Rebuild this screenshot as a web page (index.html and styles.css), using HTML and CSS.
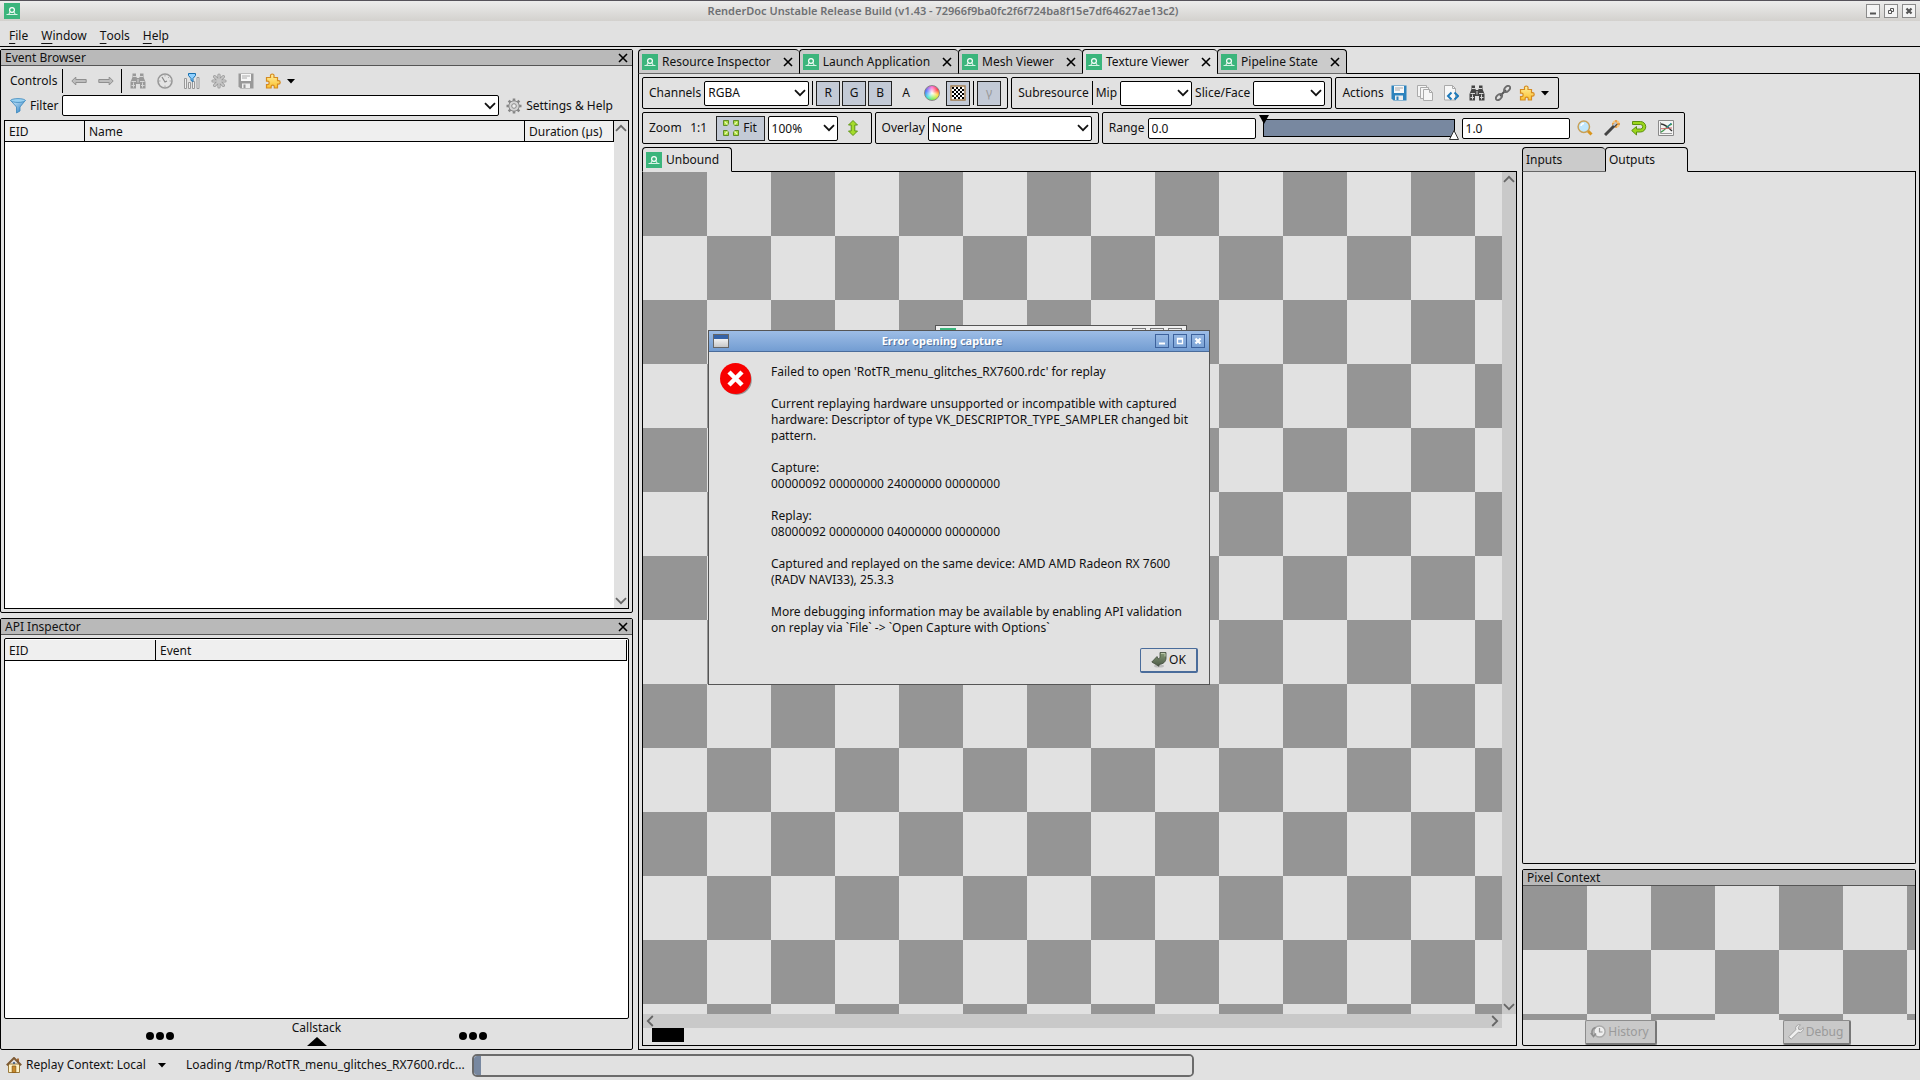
FILE: index.html
```html
<!DOCTYPE html>
<html lang="en">
<head>
    <meta charset="UTF-8">
    <meta name="viewport" content="width=device-width, initial-scale=1.0">
    <title>RenderDoc Unstable Release Build</title>
    <link rel="stylesheet" href="styles.css">
</head>
<body>
    <!-- Icon sprites -->
    <svg class="sprites" aria-hidden="true">
        <defs>
            <linearGradient id="blue" x1="0" y1="0" x2="1" y2="1"><stop offset="0" stop-color="#d9f0fd"/><stop offset="1" stop-color="#1b78c2"/></linearGradient>
            <linearGradient id="gold" x1="0" y1="0" x2="0" y2="1"><stop offset="0" stop-color="#fff0a0"/><stop offset="1" stop-color="#fbc02d"/></linearGradient>
            <linearGradient id="ok" x1="0" y1="0" x2="0" y2="1"><stop offset="0" stop-color="#869a76"/><stop offset="1" stop-color="#4c5a48"/></linearGradient>
        </defs>
        <symbol id="i-logo" viewBox="0 0 16 16"><rect width="16" height="16" fill="#3bb57c"/><circle cx="8" cy="7" r="2.4" fill="none" stroke="#fff" stroke-width="1.2"/><path d="M2.5 11.5h2.2l1.3-2.4M13.5 11.5h-2.2L10 9.1M4.7 11.5h6.6" fill="none" stroke="#d8f3e6" stroke-width="1.1"/></symbol>
        <symbol id="i-close" viewBox="0 0 10 10"><path d="M1 1l8 8M9 1L1 9" stroke="#000" stroke-width="1.6"/></symbol>
        <symbol id="i-chev" viewBox="0 0 12 8"><path d="M1 1.2l5 5 5-5" fill="none" stroke="currentColor" stroke-width="1.8"/></symbol>
        <symbol id="i-caret" viewBox="0 0 8 5"><path d="M0 0h8L4 4.6z"/></symbol>
        <symbol id="i-left" viewBox="0 0 16 16"><path d="M.8 8l4-4v2.5h10.4v3H4.8V12z" fill="#bdbdbd" stroke="#8f8f8f"/></symbol>
        <symbol id="i-right" viewBox="0 0 16 16"><path d="M15.2 8l-4-4v2.5H.8v3h10.4V12z" fill="#bdbdbd" stroke="#8f8f8f"/></symbol>
        <symbol id="i-bino" viewBox="0 0 16 16"><path d="M2.5.5h3.5v3l1 1.5h2l1-1.5v-3h3.5v3.5L15.5 9v6.5H10v-4.5H6v4.5H.5V9l2-5z" fill="currentColor"/><path d="M3 3.5h3M10 3.5h3M1.5 8.5H6M10 8.5h4.5M1.5 12.5H5M11 12.5h3.5M3.5 9.5v5M12.5 9.5v5M8 6v3.5" stroke="#d6d6d6"/></symbol>
        <symbol id="i-clock" viewBox="0 0 16 16"><circle cx="8" cy="8" r="7" fill="#e4e4e4" stroke="#999" stroke-width="1.6"/><path d="M5 4l3 5 2-1" fill="none" stroke="#888" stroke-width="1.2"/><path d="M8 2v1.500M8 12.500V14M2 8h1.500M12.500 8H14M12 4l-1 1" stroke="#aaa"/></symbol>
        <symbol id="i-bars" viewBox="0 0 16 16"><g fill="#eee" stroke="#999"><path d="M.5 5.500h2v10h-2zM4.500 9.500h2v6h-2zM8.500 8.500h2v7h-2zM13 4.500h2v11h-2z"/></g><path d="M4.500.5h7v2L9 5.500v3L7 7.500v-2l-2.500-3z" fill="#8fd0ff" stroke="#176fae"/></symbol>
        <symbol id="i-star" viewBox="0 0 16 16"><path d="M8 2v12M2 8h12M3.600 3.600l8.800 8.800M12.400 3.600l-8.800 8.800" stroke="#9a9a9a" stroke-width="3.200" stroke-linecap="round"/><path d="M8 2v12M2 8h12M3.600 3.600l8.800 8.800M12.400 3.600l-8.800 8.800" stroke="#c6c6c6" stroke-width="1.600" stroke-linecap="round"/></symbol>
        <symbol id="i-save" viewBox="0 0 16 16"><path d="M.5.5h15v15h-13l-2-2z" fill="currentColor"/><path d="M3 1h10v7H3z" fill="#f7f7f7"/><path d="M4 3h8M4 5h5" stroke="#aaa"/><path d="M4 10.500h8V15H4z" fill="#eee"/><path d="M5.500 11.500h2V15h-2z" fill="currentColor"/></symbol>
        <symbol id="i-puzzle" viewBox="0 0 16 16"><path d="M1.500 4.500h4V3.200a1.800 1.800 0 1 1 3.500 0v1.300h3.500v3.200h1a1.700 1.700 0 1 1 0 3.400h-1v3.900H9.300v-1.300a1.600 1.600 0 0 0-3.200 0V15H1.500v-3.400h1a1.700 1.700 0 0 0 0-3.400h-1z" fill="url(#gold)" stroke="#d58b22" stroke-width="1.200"/></symbol>
        <symbol id="i-filter" viewBox="0 0 16 16"><path d="M.7 2.500L6.500 9v6l3.500-2V9l5.300-6.500z" fill="url(#blue)" stroke="#3a86bd" stroke-width=".8"/><ellipse cx="8" cy="2.500" rx="7.300" ry="1.900" fill="#9bd2f2" stroke="#3a86bd" stroke-width=".8"/></symbol>
        <symbol id="i-gear" viewBox="0 0 16 16"><path d="M8 .5v15M.5 8h15M2.700 2.700l10.600 10.600M13.300 2.700L2.700 13.300" stroke="#858585" stroke-width="2.600"/><circle cx="8" cy="8" r="5.200" fill="#d5d5d5" stroke="#8a8a8a"/><circle cx="8" cy="8" r="2.300" fill="#eee" stroke="#8a8a8a"/></symbol>
        <symbol id="i-tiles" viewBox="0 0 16 16"><path d="M1 1h14v14H1z" fill="#fff" stroke="#a07c50" stroke-width="1.400"/><path d="M2 3h12M2 7h12M2 11h12" stroke="#000" stroke-width="2" stroke-dasharray="2 2"/><path d="M4 5h10M4 9h10M4 13h10" stroke="#000" stroke-width="2" stroke-dasharray="2 2"/></symbol>
        <symbol id="i-fit" viewBox="0 0 16 16"><g fill="#a9db3f" stroke="#55851b" stroke-width=".9"><path d="M.5.5h5v3.200L4.200 5.500H.5z"/><path d="M15.500.5h-5v3.200l1.300 1.800h3.700z"/><path d="M.5 15.500h5v-3.200l-1.300-1.800H.5z"/><path d="M15.500 15.500h-5v-3.200l1.300-1.800h3.700z"/></g><path d="M2 2l2.500 2.500M14 2l-2.500 2.500M2 14l2.500-2.500M14 14l-2.500-2.500" stroke="#e9f7b8" stroke-width="1.300"/></symbol>
        <symbol id="i-updown" viewBox="0 0 16 16"><path d="M8 .5l4.500 4.500H9.800v6h2.700L8 15.500 3.500 11h2.700V5H3.500z" fill="#a5dc2b" stroke="#5e9414"/></symbol>
        <symbol id="i-copy" viewBox="0 0 16 16"><g fill="#f6f6f6" stroke="#aaa"><path d="M.5.5h9v11h-9z"/><path d="M3.500 2.500h8v11h-8z"/><path d="M6.500 4.500h6l3 3v8h-9z"/></g><path d="M12.500 4.500v3h3" fill="none" stroke="#aaa"/></symbol>
        <symbol id="i-code" viewBox="0 0 16 16"><path d="M1.500.5h8l3 3V15h-11z" fill="#f8f8f8" stroke="#aaa"/><path d="M9.500.5v3h3" fill="none" stroke="#aaa"/><path d="M8.500 7.500L5 11l3.500 3.500M11.500 7.500L15 11l-3.500 3.500" fill="none" stroke="#1c79ba" stroke-width="2"/></symbol>
        <symbol id="i-link" viewBox="0 0 16 16"><path d="M5 11l6-6" stroke="#555" stroke-width="2"/><ellipse cx="4" cy="12" rx="3.600" ry="2.300" transform="rotate(-45 4 12)" fill="none" stroke="#6b6b6b" stroke-width="1.800"/><ellipse cx="12" cy="4" rx="3.600" ry="2.300" transform="rotate(-45 12 4)" fill="none" stroke="#6b6b6b" stroke-width="1.800"/></symbol>
        <symbol id="i-zoom" viewBox="0 0 16 16"><path d="M10.500 10.500l4 4" stroke="#d9951c" stroke-width="3"/><circle cx="6.800" cy="6.800" r="5.700" fill="#bfe6fb" stroke="#c9a158" stroke-width="1.500"/><path d="M4 6a3 3 0 0 1 3-2.500" fill="none" stroke="#fff" stroke-width="1.500"/></symbol>
        <symbol id="i-wand" viewBox="0 0 16 16"><circle cx="12" cy="4" r="3.800" fill="#f6c77e"/><path d="M12 0v8M8 4h8" stroke="#e88d2a" stroke-width="1.300"/><path d="M1 15L12.500 3.500" stroke="#444" stroke-width="3"/><path d="M9.500 5.500l3-3" stroke="#c3c8cc" stroke-width="2"/></symbol>
        <symbol id="i-back" viewBox="0 0 16 16"><path d="M1.500 1.500h8a5.200 5.200 0 0 1 0 10.500h-4v3L.7 10.500l4.800-4V9h4a2 2 0 0 0 0-4.500h-8z" fill="#9cd61c" stroke="#5c8f10"/></symbol>
        <symbol id="i-graph" viewBox="0 0 16 16"><path d="M.5.5h15v15H.5z" fill="#f4f4f4" stroke="#8a8a8a"/><path d="M2.500 2v11.500H14" fill="none" stroke="#999"/><path d="M3 4c4 0 7 3 11 7" fill="none" stroke="#333" stroke-width="1.300"/><path d="M3 12c4-1 6-7 11-8" fill="none" stroke="#3c9a4c" stroke-width="1.300"/><path d="M3 8.500c3 1 7-1 11-.5" fill="none" stroke="#c66" stroke-width="1.100"/><path d="M9 8l4-5" stroke="#337ac0"/></symbol>
        <symbol id="i-home" viewBox="0 0 16 16"><path d="M2.500 7h11v8.500h-11z" fill="#fff3c8" stroke="#9b7a3c"/><path d="M11 1.500h2v4h-2z" fill="#a66a34"/><path d="M.8 8.200L8 1l7.200 7.200" fill="none" stroke="#7d5a34" stroke-width="2"/><path d="M6.200 9h3.600v6.500H6.200z" fill="#c98a2c" stroke="#8a5a14" stroke-width=".8"/><circle cx="8" cy="6" r="1.100" fill="#39577d"/></symbol>
        <symbol id="i-history" viewBox="0 0 16 16"><circle cx="9.500" cy="7.500" r="5.600" fill="#eee" stroke="#aaa" stroke-width="1.500"/><path d="M9.500 4v4h3" fill="none" stroke="#999" stroke-width="1.200"/><path d="M5.500 3.500C1 5 1 10 4 12.500M.8 9l2.700 3.500L6 9.500" fill="none" stroke="#8d8d8d" stroke-width="1.600"/></symbol>
        <symbol id="i-wrench" viewBox="0 0 16 16"><path d="M1.800 14.200l-1-1.500 7-7a3.800 3.800 0 0 1 4.700-4.900L10.300 3.200l.4 2.200 2.200.4 2.300-2.200a3.800 3.800 0 0 1-4.900 4.700l-7 6.700z" fill="#efefef" stroke="#a2a2a2"/></symbol>
        <symbol id="i-ok" viewBox="0 0 16 16"><ellipse cx="8" cy="14" rx="5" ry="1.500" fill="#bdbdbd"/><path d="M9 .5h6V6c0 3.500-2.500 6-7 6.500v1.800L.8 10 6 4.500l1 2.300c1.500 0 2-.8 2-2.300z" fill="url(#ok)" stroke="#3f4a3a" stroke-width=".8"/><path d="M10 1.500h4v3" fill="none" stroke="#b7c4a8"/></symbol>
        <symbol id="i-error" viewBox="0 0 32 32"><circle cx="16.800" cy="17" r="15" fill="#777" opacity=".7"/><circle cx="15.500" cy="15.500" r="15.500" fill="#f80000"/><path d="M9 9l13 13M22 9L9 22" stroke="#fff" stroke-width="4.500"/></symbol>
        <symbol id="i-min" viewBox="0 0 12 12"><path d="M3 8.500h6" stroke="currentColor" stroke-width="2"/></symbol>
        <symbol id="i-max" viewBox="0 0 12 12"><path d="M3.500 3.500h5v5h-5zM3 4h6" fill="none" stroke="currentColor" stroke-width="1.300"/></symbol>
        <symbol id="i-restore" viewBox="0 0 12 12"><path d="M5.500 5V3.500h3v3H7M3.500 5.500h3v3h-3z" fill="none" stroke="currentColor"/></symbol>
        <symbol id="i-x" viewBox="0 0 12 12"><path d="M3.500 3.500l5 5M8.500 3.500l-5 5" stroke="currentColor" stroke-width="2.200"/></symbol>
    </svg>

    <header class="titlebar">
        <svg class="icon"><use href="#i-logo"/></svg>
        <h1>RenderDoc Unstable Release Build (v1.43 - 72966f9ba0fc2f6f724ba8f15e7df64627ae13c2)</h1>
        <div class="win-buttons">
            <button aria-label="Minimize"><svg><use href="#i-min"/></svg></button>
            <button aria-label="Restore"><svg><use href="#i-restore"/></svg></button>
            <button aria-label="Close"><svg><use href="#i-x"/></svg></button>
        </div>
    </header>

    <nav class="menubar">
        <button><u>F</u>ile</button>
        <button><u>W</u>indow</button>
        <button><u>T</u>ools</button>
        <button><u>H</u>elp</button>
    </nav>

    <main class="workspace">
        <div class="left">
            <section class="dock dock-events">
                <div class="dock-title"><h2>Event Browser</h2><button aria-label="Close"><svg class="x"><use href="#i-close"/></svg></button></div>
                <div class="controls">
                    <span>Controls</span>
                    <i class="sep"></i>
                    <button aria-label="Previous"><svg class="icon"><use href="#i-left"/></svg></button>
                    <button aria-label="Next"><svg class="icon"><use href="#i-right"/></svg></button>
                    <i class="sep"></i>
                    <button class="dim" aria-label="Find"><svg class="icon"><use href="#i-bino"/></svg></button>
                    <button aria-label="Time durations"><svg class="icon"><use href="#i-clock"/></svg></button>
                    <button aria-label="Columns"><svg class="icon"><use href="#i-bars"/></svg></button>
                    <button aria-label="Bookmark"><svg class="icon"><use href="#i-star"/></svg></button>
                    <button class="dim" aria-label="Export"><svg class="icon"><use href="#i-save"/></svg></button>
                    <button class="drop" aria-label="Extensions"><svg class="icon"><use href="#i-puzzle"/></svg><svg class="caret"><use href="#i-caret"/></svg></button>
                </div>
                <div class="filter">
                    <svg class="icon"><use href="#i-filter"/></svg>
                    <label for="filter">Filter</label>
                    <span class="combo">
                        <input type="text" id="filter">
                        <svg class="chev"><use href="#i-chev"/></svg>
                    </span>
                    <button><svg class="icon"><use href="#i-gear"/></svg>Settings &amp; Help</button>
                </div>
                <div class="list">
                    <div class="list-body">
                        <table>
                            <thead><tr><th class="col-eid">EID</th><th>Name</th><th class="col-duration">Duration (µs)</th></tr></thead>
                        </table>
                    </div>
                    <div class="scroll-v"><svg class="chev up"><use href="#i-chev"/></svg><svg class="chev"><use href="#i-chev"/></svg></div>
                </div>
            </section>

            <section class="dock dock-api">
                <div class="dock-title"><h2>API Inspector</h2><button aria-label="Close"><svg class="x"><use href="#i-close"/></svg></button></div>
                <div class="list inset">
                    <div class="list-body">
                        <table>
                            <thead><tr><th class="col-api">EID</th><th>Event</th></tr></thead>
                        </table>
                    </div>
                </div>
                <button class="callstack">
                    <span class="dots"><i></i><i></i><i></i></span>
                    <span class="callstack-label">Callstack<svg viewBox="0 0 20 9"><path d="M10 0l10 9H0z"/></svg></span>
                    <span class="dots"><i></i><i></i><i></i></span>
                </button>
            </section>
        </div>

        <div class="right">
            <div class="tabs">
                <button class="tab"><svg class="icon"><use href="#i-logo"/></svg>Resource Inspector<svg class="x"><use href="#i-close"/></svg></button>
                <button class="tab"><svg class="icon"><use href="#i-logo"/></svg>Launch Application<svg class="x"><use href="#i-close"/></svg></button>
                <button class="tab"><svg class="icon"><use href="#i-logo"/></svg>Mesh Viewer<svg class="x"><use href="#i-close"/></svg></button>
                <button class="tab active"><svg class="icon"><use href="#i-logo"/></svg>Texture Viewer<svg class="x"><use href="#i-close"/></svg></button>
                <button class="tab"><svg class="icon"><use href="#i-logo"/></svg>Pipeline State<svg class="x"><use href="#i-close"/></svg></button>
                <span class="tab-fill"></span>
            </div>

            <div class="viewer">
                <div class="toolbars">
                    <div class="toolbar">
                        <label for="channels">Channels</label>
                        <span class="combo w-channels"><select id="channels"><option>RGBA</option></select><svg class="chev"><use href="#i-chev"/></svg></span>
                        <i class="sep"></i>
                        <div class="toggles">
                            <button class="tool on">R</button>
                            <button class="tool on">G</button>
                            <button class="tool on">B</button>
                            <button class="tool">A</button>
                            <button class="tool" aria-label="Background colour"><i class="wheel"></i></button>
                            <button class="tool on" aria-label="Checkerboard"><svg class="icon"><use href="#i-tiles"/></svg></button>
                        </div>
                        <i class="sep"></i>
                        <button class="tool on" disabled>γ</button>
                    </div>
                    <div class="toolbar">
                        <span>Subresource</span>
                        <i class="sep"></i>
                        <label for="mip">Mip</label>
                        <span class="combo w-mip"><select id="mip"></select><svg class="chev"><use href="#i-chev"/></svg></span>
                        <label for="slice">Slice/Face</label>
                        <span class="combo w-mip"><select id="slice"></select><svg class="chev"><use href="#i-chev"/></svg></span>
                    </div>
                    <div class="toolbar">
                        <span>Actions</span>
                        <div class="toggles">
                            <button class="tool save" aria-label="Save"><svg class="icon"><use href="#i-save"/></svg></button>
                            <button class="tool" aria-label="Texture list"><svg class="icon"><use href="#i-copy"/></svg></button>
                            <button class="tool" aria-label="Open shader"><svg class="icon"><use href="#i-code"/></svg></button>
                            <button class="tool dark" aria-label="Find"><svg class="icon"><use href="#i-bino"/></svg></button>
                            <button class="tool" aria-label="Lock"><svg class="icon"><use href="#i-link"/></svg></button>
                            <button class="tool drop" aria-label="Extensions"><svg class="icon"><use href="#i-puzzle"/></svg><svg class="caret"><use href="#i-caret"/></svg></button>
                        </div>
                    </div>
                </div>
                <div class="toolbars">
                    <div class="toolbar">
                        <label for="zoom">Zoom</label>
                        <button class="tool wide">1:1</button>
                        <button class="tool fit on"><svg class="icon"><use href="#i-fit"/></svg>Fit</button>
                        <span class="combo w-zoom"><input type="text" id="zoom" value="100%"><svg class="chev"><use href="#i-chev"/></svg></span>
                        <button class="tool" aria-label="Flip Y"><svg class="icon"><use href="#i-updown"/></svg></button>
                    </div>
                    <div class="toolbar">
                        <label for="overlay">Overlay</label>
                        <span class="combo w-overlay"><select id="overlay"><option>None</option></select><svg class="chev"><use href="#i-chev"/></svg></span>
                    </div>
                    <div class="toolbar">
                        <label for="range-min">Range</label>
                        <input type="text" class="field" id="range-min" value="0.0">
                        <div class="range">
                            <input type="range" aria-label="Black point" value="0">
                            <input type="range" aria-label="White point" value="100">
                            <svg class="mark black" viewBox="0 0 10 10"><path d="M0 0h10L5 9z"/></svg>
                            <svg class="mark white" viewBox="0 0 10 10"><path d="M.5 9.500h9L5 .5z" fill="#fff" stroke="#333"/></svg>
                        </div>
                        <input type="text" class="field" aria-label="Range maximum" value="1.0">
                        <div class="range-tools">
                            <button class="tool" aria-label="Zoom range"><svg class="icon"><use href="#i-zoom"/></svg></button>
                            <button class="tool" aria-label="Autofit"><svg class="icon"><use href="#i-wand"/></svg></button>
                            <button class="tool" aria-label="Reset range"><svg class="icon"><use href="#i-back"/></svg></button>
                            <button class="tool" aria-label="Histogram"><svg class="icon"><use href="#i-graph"/></svg></button>
                        </div>
                    </div>
                </div>

                <div class="panes">
                    <div class="texture">
                        <div class="tabs">
                            <button class="tab active last"><svg class="icon"><use href="#i-logo"/></svg>Unbound</button>
                            <span class="tab-fill"></span>
                        </div>
                        <div class="texture-body">
                            <div class="checker"></div>
                            <div class="scroll-v shade"><svg class="chev up"><use href="#i-chev"/></svg><svg class="chev"><use href="#i-chev"/></svg></div>
                            <div class="scroll-h"><svg class="chev prev"><use href="#i-chev"/></svg><svg class="chev next"><use href="#i-chev"/></svg></div>
                            <div class="status-strip"><i class="swatch"></i></div>
                        </div>
                    </div>

                    <div class="side">
                        <div class="thumbs">
                            <div class="tabs">
                                <button class="tab plain">Inputs</button>
                                <button class="tab plain active last">Outputs</button>
                                <span class="tab-fill"></span>
                            </div>
                            <div class="thumbs-body"></div>
                        </div>
                        <section class="dock pixel">
                            <div class="dock-title"><h2>Pixel Context</h2></div>
                            <div class="checker"></div>
                            <div class="pixel-buttons">
                                <div><button disabled><svg class="icon"><use href="#i-history"/></svg>History</button></div>
                                <div><button disabled><svg class="icon"><use href="#i-wrench"/></svg>Debug</button></div>
                            </div>
                        </section>
                    </div>
                </div>
            </div>
        </div>
    </main>

    <footer class="statusbar">
        <button class="context"><svg class="icon"><use href="#i-home"/></svg>Replay Context: Local<svg class="caret"><use href="#i-caret"/></svg></button>
        <label for="progress">Loading /tmp/RotTR_menu_glitches_RX7600.rdc...</label>
        <progress id="progress" value="1" max="100"></progress>
    </footer>

    <!-- Loading window, mostly hidden by the error dialog -->
    <div class="loading-window"><i class="loading-icon"></i><span><i></i><i></i><i></i></span></div>

    <div class="dialog" role="alertdialog" aria-labelledby="dialog-title">
        <div class="dialog-title">
            <i class="dialog-icon"></i>
            <h2 id="dialog-title">Error opening capture</h2>
            <div class="win-buttons">
                <button aria-label="Minimize"><svg><use href="#i-min"/></svg></button>
                <button aria-label="Maximize"><svg><use href="#i-max"/></svg></button>
                <button aria-label="Close"><svg><use href="#i-x"/></svg></button>
            </div>
        </div>
        <div class="dialog-body">
            <svg class="error"><use href="#i-error"/></svg>
            <div class="message">
                <p>Failed to open 'RotTR_menu_glitches_RX7600.rdc' for replay</p>
                <p>Current replaying hardware unsupported or incompatible with captured<br>hardware: Descriptor of type VK_DESCRIPTOR_TYPE_SAMPLER changed bit<br>pattern.</p>
                <p>Capture:<br>00000092 00000000 24000000 00000000</p>
                <p>Replay:<br>08000092 00000000 04000000 00000000</p>
                <p>Captured and replayed on the same device: AMD AMD Radeon RX 7600<br>(RADV NAVI33), 25.3.3</p>
                <p>More debugging information may be available by enabling API validation<br>on replay via `File` -&gt; `Open Capture with Options`</p>
            </div>
        </div>
        <div class="dialog-buttons"><button><svg class="icon"><use href="#i-ok"/></svg>OK</button></div>
    </div>
</body>
</html>
```
FILE: styles.css
```css
* {
    box-sizing: border-box;
}
body {
    margin: 0;
    height: 100vh;
    display: flex;
    flex-direction: column;
    overflow: hidden;
    position: relative;
    background: #e1e1e1;
    color: #111;
    font: 12px/16px "Noto Sans", sans-serif;
    white-space: nowrap;
}
button, input, select {
    font: inherit;
    color: inherit;
    margin: 0;
    padding: 0;
    border: none;
    background: none;
}
button {
    display: flex;
    align-items: center;
}
h1, h2, p {
    margin: 0;
    font-size: 12px;
    font-weight: normal;
}
svg {
    display: block;
    flex: none;
}
.sprites {
    position: absolute;
    width: 0;
    height: 0;
}
.icon {
    width: 16px;
    height: 16px;
}
.x {
    width: 10px;
    height: 10px;
}
.caret {
    width: 8px;
    height: 5px;
}
.chev {
    width: 12px;
    height: 8px;
}
.sep {
    width: 1px;
    align-self: stretch;
    background: #000;
}

/* Title bar and menu */
.titlebar {
    height: 21px;
    flex: none;
    display: flex;
    align-items: center;
    padding: 0 4px;
    border-top: 1px solid #55525a;
    background: linear-gradient(#ececec, #d3d1ce);
}
.titlebar h1 {
    flex: 1;
    text-align: center;
    font-size: 11px;
    font-weight: 600;
    color: #6e7073;
}
.win-buttons {
    display: flex;
    gap: 4px;
}
.win-buttons button {
    width: 14px;
    height: 14px;
    border: 1px solid #8b8b8b;
    background: #f4f4f4;
    color: #555;
}
.win-buttons svg {
    width: 12px;
    height: 12px;
}
.menubar {
    height: 26px;
    flex: none;
    display: flex;
    gap: 13px;
    padding: 5px 9px 0;
    border-bottom: 1px solid #000;
}
.menubar u {
    text-underline-offset: 3px;
}

/* Main split */
.workspace {
    flex: 1;
    min-height: 0;
    display: flex;
    gap: 5px;
    padding-top: 2px;
}
.left {
    flex: 633 0 0;
    min-width: 0;
    display: flex;
    flex-direction: column;
    gap: 5px;
}
.dock {
    display: flex;
    flex-direction: column;
    border: 1px solid #000;
    border-radius: 2px;
    min-height: 0;
}
.dock-events {
    flex: 562 0 0;
}
.dock-api {
    flex: 430 0 0;
}
.dock-title {
    height: 16px;
    flex: none;
    display: flex;
    align-items: center;
    justify-content: space-between;
    padding: 0 4px;
    background: #b9b9b9;
    border-bottom: 1px solid #555;
}
.controls {
    display: flex;
    align-items: center;
    gap: 11px;
    height: 24px;
    margin: 3px 0 2px;
    padding-left: 9px;
}
.controls span {
    margin-right: -6px;
}
.controls .sep {
    margin-right: -3px;
}
.controls button + .sep {
    margin-left: -4px;
}
.dim {
    color: #999;
}
.drop {
    gap: 6px;
}
.filter {
    display: flex;
    align-items: center;
    gap: 4px;
    padding: 0 19px 0 9px;
}
.filter button {
    margin-left: 3px;
    gap: 4px;
}
.combo {
    display: flex;
    align-items: center;
    height: 25px;
    padding-right: 2px;
    background: #fff;
    border: 1px solid #000;
    border-radius: 2px;
}
.combo input, .combo select {
    appearance: none;
    flex: 1;
    min-width: 0;
    height: 100%;
    padding-left: 3px;
}
.combo .chev {
    margin-left: -12px;
    pointer-events: none;
}
.filter .combo {
    flex: 1;
    height: 21px;
}
.list {
    flex: 1;
    min-height: 0;
    display: flex;
    margin: 4px 3px 3px;
    border: 1px solid #000;
    background: #fff;
}
.inset {
    padding: 1px 1px 0 0;
    margin-top: 3px;
    margin-bottom: 0;
    border-radius: 2px;
}
.list-body {
    flex: 1;
}
table {
    width: 100%;
    table-layout: fixed;
    border-collapse: separate;
    border-spacing: 0;
}
th {
    height: 21px;
    padding: 2px 4px 0;
    text-align: left;
    font-weight: normal;
    background: #efefef;
    border-right: 1px solid #000;
    border-bottom: 1px solid #000;
}
.col-eid {
    width: 80px;
}
.col-duration {
    width: 89px;
}
.col-api {
    width: 151px;
}
.scroll-v {
    width: 14px;
    display: flex;
    flex-direction: column;
    justify-content: space-between;
    align-items: center;
    padding: 3px 0;
    background: #e1e1e1;
    color: #666;
}
.up {
    transform: rotate(180deg);
}
.callstack {
    height: 30px;
    align-items: flex-start;
    justify-content: space-between;
    padding: 0 23%;
}
.callstack-label {
    display: flex;
    flex-direction: column;
    align-items: center;
    gap: 1px;
    padding-top: 1px;
}
.callstack-label svg {
    width: 20px;
    height: 9px;
}
.dots {
    display: flex;
    gap: 2px;
    padding-top: 13px;
}
.dots i {
    width: 8px;
    height: 8px;
    border-radius: 50%;
    background: #000;
}

/* Tabs */
.right {
    flex: 1282 0 0;
    min-width: 0;
    display: flex;
    flex-direction: column;
}
.tabs {
    display: flex;
    height: 25px;
    flex: none;
}
.tab {
    gap: 4px;
    padding: 0 6px 0 3px;
    background: #cbcbcb;
    border: 1px solid #000;
    border-right: none;
    border-bottom-color: #666;
    border-radius: 4px 4px 0 0;
}
.tab .x {
    margin-left: 8px;
}
.tab.active {
    background: none;
    border-bottom-color: transparent;
}
.tab.last, .tab:nth-last-child(2) {
    border-right: 1px solid #000;
}
.texture .tab {
    padding-right: 12px;
}
.plain {
    width: 83px;
}
.tab-fill {
    flex: 1;
    border-bottom: 1px solid #000;
}

/* Texture viewer */
.viewer {
    flex: 1;
    min-height: 0;
    display: flex;
    flex-direction: column;
    gap: 3px;
    padding: 3px;
    border: 1px solid #000;
    border-top: none;
}
.toolbars {
    display: flex;
    gap: 3px;
}
.toolbar {
    display: flex;
    align-items: center;
    gap: 3px;
    height: 32px;
    padding: 0 6px;
    border: 1px solid #000;
    border-radius: 2px;
}
.toolbar .sep {
    margin: 3px 0;
}
.toggles {
    display: flex;
    gap: 2px;
}
.tool {
    width: 24px;
    height: 25px;
    justify-content: center;
}
.on {
    background: #c3cad6;
    border: 1px solid #222;
}
.tool:disabled {
    color: #999;
}
.wheel {
    width: 16px;
    height: 16px;
    border-radius: 50%;
    background: radial-gradient(#fff, transparent 70%), conic-gradient(#f6c, #f33 60deg, #fd3 110deg, #7e4 170deg, #3dd 230deg, #46f 290deg, #f6c);
    border: 1px solid #888;
}
.save {
    color: #2d83bd;
}
.dark {
    color: #444;
}
.tool.drop {
    width: 35px;
}
.wide {
    width: 28px;
}
.fit {
    width: 49px;
    gap: 4px;
}
.w-channels {
    width: 105px;
}
.w-mip {
    width: 72px;
}
.w-zoom {
    width: 70px;
}
.w-overlay {
    width: 164px;
}
.field {
    width: 108px;
    height: 21px;
    padding: 0 3px;
    background: #fff;
    border: 1px solid #000;
    border-radius: 2px;
}
.range {
    position: relative;
    width: 192px;
    height: 18px;
    margin: 0 4px;
    background: #7888a0;
    border: 1px solid #000;
}
.range input {
    position: absolute;
    inset: 0;
    width: 100%;
    appearance: none;
}
.range input::-webkit-slider-thumb {
    appearance: none;
    width: 10px;
    height: 18px;
}
.mark {
    position: absolute;
    width: 10px;
    height: 10px;
}
.black {
    left: -5px;
    top: -5px;
}
.white {
    right: -5px;
    bottom: -4px;
}
.range-tools {
    display: flex;
    gap: 3px;
}

/* Panes */
.panes {
    flex: 1;
    min-height: 0;
    display: flex;
    gap: 5px;
}
.texture {
    flex: 875 0 0;
    display: flex;
    flex-direction: column;
}
.texture-body {
    flex: 1;
    display: grid;
    grid-template: 1fr 14px 17px / 1fr 14px;
    border: 1px solid #000;
    border-top: none;
}
.checker {
    background: repeating-conic-gradient(#e1e1e1 0 25%, #959595 0 50%) 0 0 / 128px 128px;
}
.shade, .scroll-h {
    background: #c9c9c9;
}
.scroll-h {
    display: flex;
    align-items: center;
    justify-content: space-between;
    padding: 0 1px;
    color: #666;
}
.prev {
    transform: rotate(90deg);
}
.next {
    transform: rotate(-90deg);
}
.status-strip {
    grid-column: 1 / 3;
    padding-left: 9px;
}
.swatch {
    display: block;
    width: 32px;
    height: 14px;
    background: #000;
}
.side {
    flex: 394 0 0;
    display: flex;
    flex-direction: column;
    gap: 5px;
}
.thumbs {
    flex: 717 0 0;
    display: flex;
    flex-direction: column;
}
.thumbs-body {
    flex: 1;
    border: 1px solid #000;
    border-top: none;
    border-radius: 0 0 2px 2px;
}
.pixel {
    flex: 175 0 0;
}
.pixel .checker {
    flex: 1;
}
.pixel-buttons {
    display: flex;
}
.pixel-buttons div {
    flex: 1;
    display: flex;
    justify-content: center;
}
.pixel-buttons button {
    height: 25px;
    gap: 2px;
    padding: 0 6px 0 4px;
    color: #9a9a9a;
    background: #c9c9c9;
    border: 1px solid #8c8c8c;
    border-right: 2px solid #777;
    border-bottom: 2px solid #777;
    border-radius: 2px;
}

/* Status bar */
.statusbar {
    height: 30px;
    flex: none;
    display: flex;
    align-items: center;
    padding-left: 6px;
}
.context {
    gap: 4px;
    margin-right: 20px;
}
.context .caret {
    margin-left: 8px;
}
progress {
    appearance: none;
    width: 38%;
    max-width: 722px;
    height: 23px;
    margin-left: 7px;
    border: 2px solid #6b6b6b;
    border-radius: 5px;
    overflow: hidden;
}
progress::-webkit-progress-bar {
    background: #e1e1e1;
}
progress::-webkit-progress-value {
    background: #7888a0;
}

/* Floating windows */
.loading-window {
    position: absolute;
    left: 935px;
    top: 325px;
    width: 252px;
    height: 20px;
    display: flex;
    justify-content: space-between;
    padding: 2px 4px;
    background: #eee;
    border: 1px solid #555;
}
.loading-icon {
    width: 16px;
    background: #3bb57c;
}
.loading-window span {
    display: flex;
    gap: 4px;
}
.loading-window span i {
    width: 14px;
    border: 1px solid #777;
}
.dialog {
    position: absolute;
    left: 708px;
    top: 330px;
    width: 502px;
    background: #e1e1e1;
    border: 1px solid #555;
}
.dialog-title {
    height: 21px;
    display: flex;
    align-items: center;
    padding: 0 4px;
    background: linear-gradient(#9dbde6, #739dd2);
    border-bottom: 1px solid #4a6c9b;
}
.dialog-title h2 {
    flex: 1;
    text-align: center;
    font-size: 11px;
    font-weight: bold;
    color: #fff;
    text-shadow: 1px 1px 0 #55749d;
}
.dialog-icon {
    width: 16px;
    height: 14px;
    border: 1px solid #666;
    background: linear-gradient(#3563a8 4px, #f2f2f2 4px, #c8c8c8);
}
.dialog .win-buttons button {
    border-color: #3d629c;
    background: none;
    color: #fff;
}
.dialog-body {
    display: flex;
    gap: 19px;
    padding: 11px 11px 0;
}
.error {
    width: 32px;
    height: 32px;
}
.message {
    display: flex;
    flex-direction: column;
    gap: 16px;
    padding-top: 1px;
}
.dialog-buttons {
    display: flex;
    justify-content: flex-end;
    padding: 12px 11px 11px;
}
.dialog-buttons button {
    width: 58px;
    height: 25px;
    justify-content: center;
    gap: 2px;
    border: 1px solid #4a6c9b;
    border-right-width: 2px;
    border-bottom-width: 2px;
    border-radius: 2px;
}
```
